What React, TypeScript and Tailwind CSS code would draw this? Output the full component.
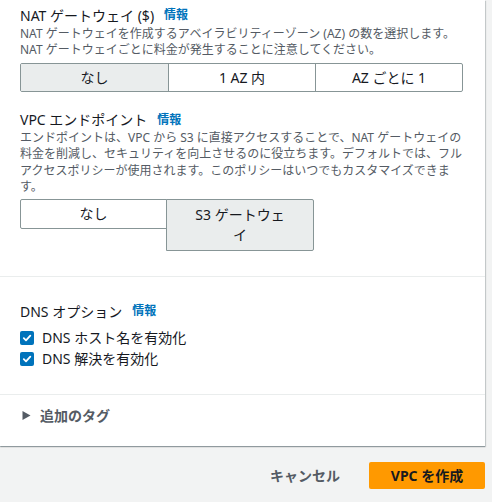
import React from "react";

const font = "font-['Noto_Sans','Noto_Sans_CJK_JP',sans-serif]";

const InfoLink = () => (
  <span className="ml-[10px] text-[12px] font-bold text-[#0073bb]">情報</span>
);

const CheckRow = ({ label }: { label: string }) => (
  <label className="flex items-center gap-[8px] h-[21px]">
    <span className="flex items-center justify-center w-[14px] h-[14px] rounded-[2px] bg-[#0073bb]">
      <svg width="10" height="10" viewBox="0 0 10 10" fill="none">
        <path d="M1.8 5.2 L4 7.3 L8.3 2.6" stroke="white" strokeWidth="1.8" strokeLinecap="round" strokeLinejoin="round" />
      </svg>
    </span>
    <span className="text-[14px] leading-5 text-[#16191f]">{label}</span>
  </label>
);

const App = () => {
  const natOptions = ["なし", "1 AZ 内", "AZ ごとに 1"];

  return (
    <div className={`w-[492px] h-[502px] overflow-hidden bg-[#f2f3f3] pr-[7px] ${font}`}>
      <div className="bg-white shadow-[0_1px_1px_0_rgba(0,28,36,0.3),1px_1px_1px_0_rgba(0,28,36,0.15)]">
        {/* NAT / VPC endpoint */}
        <section className="pl-[20px] pr-[22px] pt-[5px] pb-[25px]">
          <div className="flex items-center h-[20px]">
            <span className="text-[14px] text-[#16191f]">NAT ゲートウェイ ($)</span>
            <InfoLink />
          </div>
          <p className="mt-[1px] text-[12px] leading-[16.4px] text-[#545b64]">
            NAT ゲートウェイを作成するアベイラビリティーゾーン (AZ) の数を選択します。NAT ゲートウェイごとに料金が発生することに注意してください。
          </p>
          <div className="mt-[4px] grid grid-cols-3 border border-[#879596] rounded-[2px] overflow-hidden">
            {natOptions.map((o, i) => (
              <div
                key={o}
                className={`h-[27px] flex items-center justify-center text-[14px] text-[#16191f] ${
                  i === 0 ? "bg-[#eaeded]" : "border-l border-[#879596]"
                }`}
              >
                {o}
              </div>
            ))}
          </div>

          <div className="mt-[18px] flex items-center h-[20px]">
            <span className="text-[14px] text-[#16191f]">VPC エンドポイント</span>
            <InfoLink />
          </div>
          <p className="text-[12px] leading-[16.4px] text-[#545b64]">
            エンドポイントは、VPC から S3 に直接アクセスすることで、NAT ゲートウェイの料金を削減し、セキュリティを向上させるのに役立ちます。デフォルトでは、フルアクセスポリシーが使用されます。このポリシーはいつでもカスタマイズできます。
          </p>
          <div className="mt-[4px] flex items-start">
            <div className="w-[147px] py-[4px] px-[22px] border border-[#879596] rounded-l-[2px] text-center text-[14px] leading-5 text-[#16191f]">
              なし
            </div>
            <div className="w-[148px] -ml-px py-[5px] px-[26px] border border-[#879596] rounded-r-[2px] bg-[#eaeded] text-center text-[14px] leading-5 text-[#16191f]">
              S3 ゲートウェイ
            </div>
          </div>
        </section>

        {/* DNS options */}
        <section className="border-t border-[#eaeded] px-[20px] pt-[24px] pb-[25px]">
          <div className="flex items-center h-[20px]">
            <span className="text-[14px] text-[#16191f]">DNS オプション</span>
            <InfoLink />
          </div>
          <div className="mt-[6px] flex flex-col">
            <CheckRow label="DNS ホスト名を有効化" />
            <CheckRow label="DNS 解決を有効化" />
          </div>
        </section>

        {/* Tags */}
        <section className="border-t border-[#eaeded] px-[20px] pt-[10px] pb-[21px]">
          <div className="flex items-center h-[20px] gap-[8px]">
            <svg width="11" height="11" viewBox="0 0 11 11" className="ml-[1px]">
              <path d="M1.5 1 L9.5 5.5 L1.5 10 Z" fill="#545b64" />
            </svg>
            <span className="text-[14px] font-bold text-[#545b64]">追加のタグ</span>
          </div>
        </section>
      </div>

      <div className="mt-[16px] flex items-center justify-end gap-[29px]">
        <span className="text-[14px] font-bold text-[#545b64]">キャンセル</span>
        <button className="w-[116px] h-[27px] rounded-[2px] bg-[#ff9900] text-[14px] font-bold text-[#16191f]">
          VPC を作成
        </button>
      </div>
    </div>
  );
};

export default App;
